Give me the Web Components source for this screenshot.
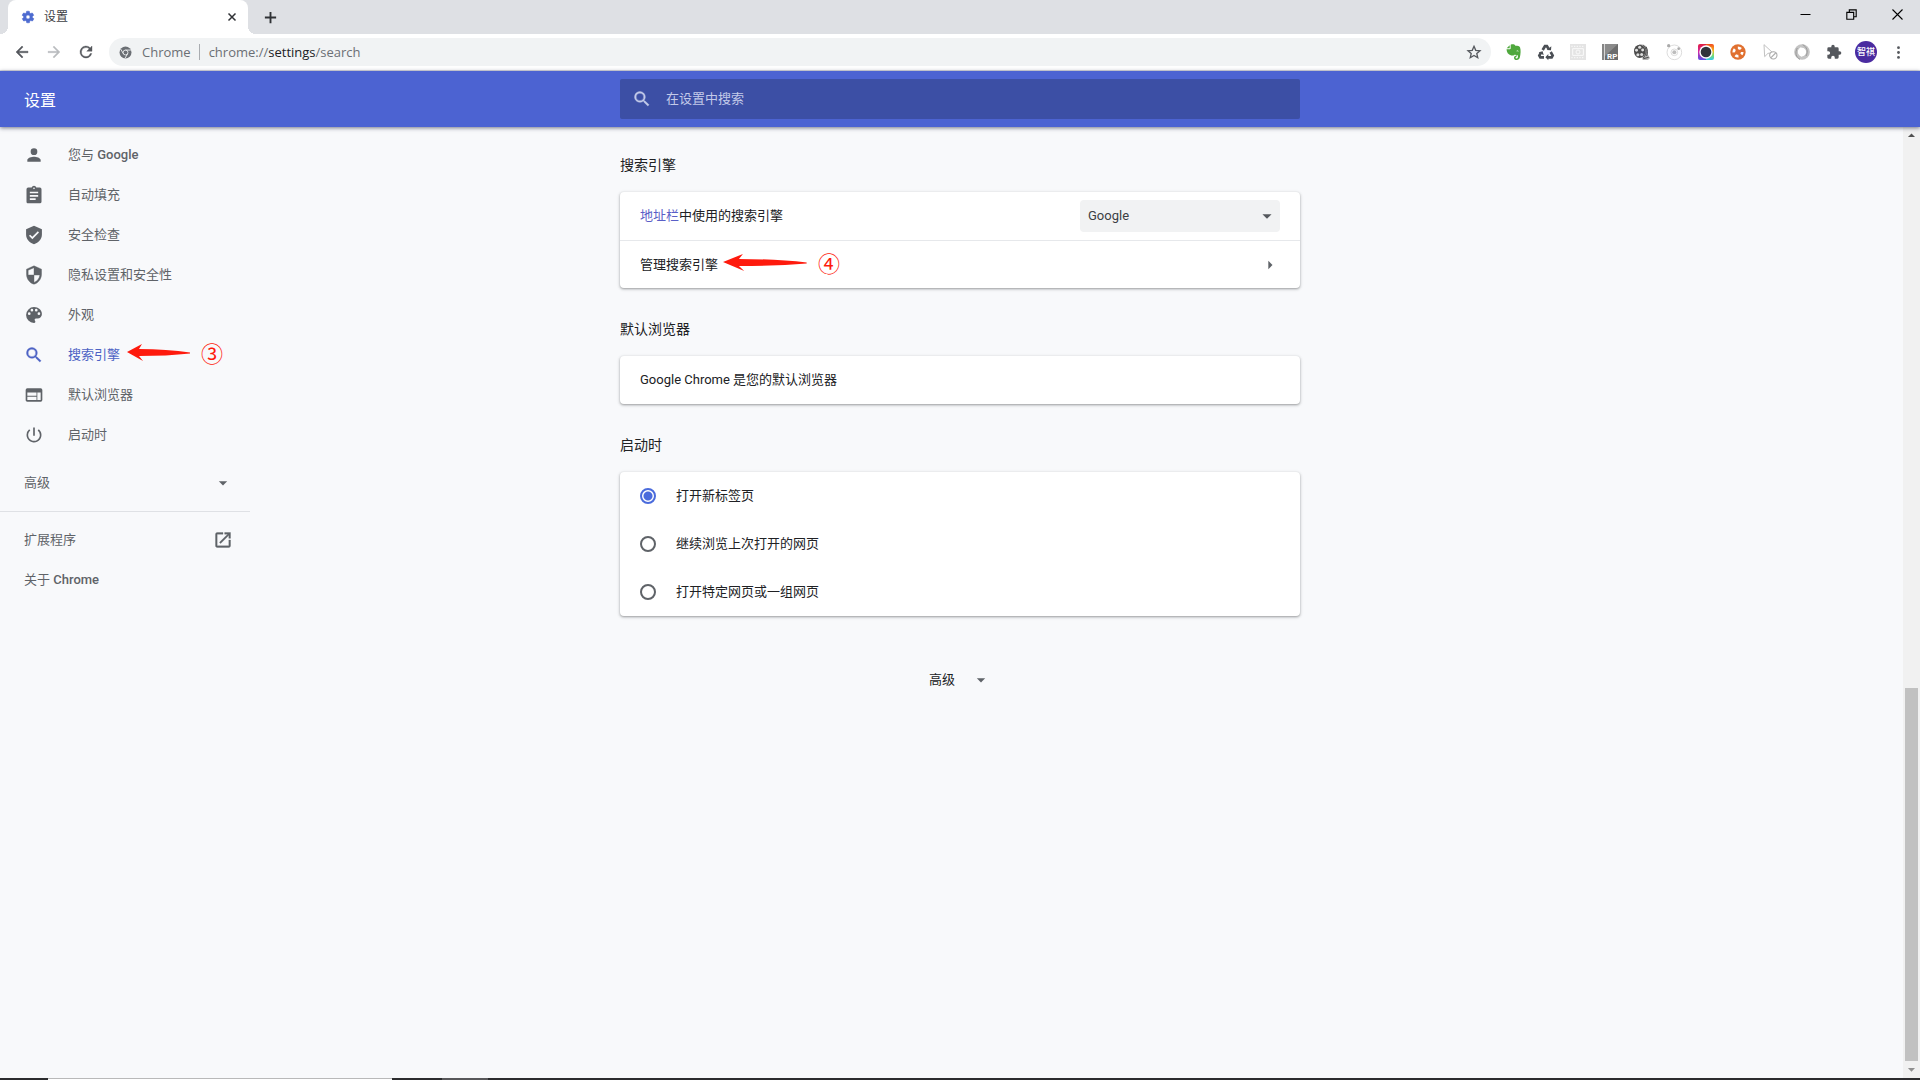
<!DOCTYPE html>
<html lang="zh-CN">
<head>
<meta charset="utf-8">
<title>设置</title>
<style>
  html, body { margin: 0; height: 100%; }
  body { font: 13px/20px Roboto, "Noto Sans CJK SC", sans-serif; color: #202124; background: #f8f9fb; overflow: hidden; }
</style>
</head>
<body>
<browser-window></browser-window>

<script>
const ICONS = {
  gear: '<path d="M19.4 13c0-.3.1-.6.1-1s0-.7-.1-1l2.1-1.6c.2-.2.3-.4.1-.7l-2-3.4c-.1-.2-.4-.3-.6-.2l-2.5 1c-.5-.4-1.100-.7-1.700-1l-.4-2.600c0-.2-.2-.4-.5-.4h-4c-.2 0-.5.2-.5.4l-.4 2.600c-.6.3-1.200.6-1.700 1l-2.500-1c-.2-.1-.5 0-.6.2l-2 3.400c-.1.2-.1.5.1.7L4.600 11c0 .3-.1.700-.1 1s0 .700.1 1l-2.100 1.600c-.2.2-.3.4-.1.7l2 3.400c.1.2.4.3.6.2l2.500-1c.5.4 1.100.7 1.700 1l.4 2.600c0 .2.3.4.5.4h4c.3 0 .5-.2.5-.4l.4-2.600c.6-.3 1.200-.6 1.700-1l2.500 1c.2.1.5 0 .6-.2l2-3.400c.1-.2.1-.5-.1-.7zM12 15.500a3.500 3.500 0 1 1 0-7 3.500 3.500 0 0 1 0 7z" stroke="currentColor" stroke-width="1"/>',
  close: '<path d="M5 5l14 14M19 5L5 19" fill="none" stroke="currentColor" stroke-width="3"/>',
  plus: '<path d="M12 3v18M3 12h18" fill="none" stroke="currentColor" stroke-width="3"/>',
  back: '<path d="M20 11H7.800l5.600-5.600L12 4l-8 8 8 8 1.400-1.400L7.800 13H20z" stroke="currentColor" stroke-width=".6"/>',
  forward: '<path d="M12 4l-1.400 1.400 5.600 5.600H4v2h12.200l-5.600 5.600L12 20l8-8z" stroke="currentColor" stroke-width=".4"/>',
  reload: '<path d="M17.650 6.350A8 8 0 1 0 19.730 14h-2.080A6 6 0 1 1 12 6c1.660 0 3.140.69 4.220 1.780L13 11h7V4z" stroke="currentColor" stroke-width=".5"/>',
  chrome: '<circle cx="12" cy="12" r="11"/><g fill="none" stroke="#f1f3f4" stroke-width="1.600"><circle cx="12" cy="12" r="4.500"/><path d="M12 7.500h10M8.100 14.300L3.200 5.800M15.900 14.300L11 22.800"/></g>',
  star: '<path d="M12 3.500l2.600 6 6.400.6-4.800 4.200 1.400 6.300-5.600-3.300-5.600 3.300 1.400-6.300L3 10.100l6.400-.6z" fill="none" stroke="currentColor" stroke-width="2"/>',
  minimize: '<path d="M4 12h16" fill="none" stroke="currentColor" stroke-width="1.600"/>',
  restore: '<path d="M4.500 8.500h11v11h-11zM8.500 8.500v-4h11v11h-4" fill="none" stroke="currentColor" stroke-width="1.800"/>',
  shut: '<path d="M4 4l16 16M20 4L4 20" fill="none" stroke="currentColor" stroke-width="1.700"/>',
  more: '<circle cx="12" cy="3" r="2.600"/><circle cx="12" cy="12" r="2.600"/><circle cx="12" cy="21" r="2.600"/>',
  person: '<path d="M12 12a4 4 0 1 0 0-8 4 4 0 0 0 0 8zm0 2c-2.670 0-8 1.340-8 4v2h16v-2c0-2.660-5.330-4-8-4z"/>',
  clipboard: '<path d="M19 3h-4.180a3 3 0 0 0-5.640 0H5a2 2 0 0 0-2 2v15c0 1.100.9 2 2 2h14a2 2 0 0 0 2-2V5a2 2 0 0 0-2-2zm-7 0a1 1 0 1 1 0 2 1 1 0 0 1 0-2zm2 15H7v-2h7zm3-4H7v-2h10zm0-4H7V8h10z"/>',
  verified: '<path d="M12 1L2.500 5v6.500c0 5.500 4 10.200 9.500 11.500 5.500-1.300 9.500-6 9.500-11.500V5zm-2 16l-4-4 1.410-1.410L10 14.170l6.590-6.590L18 9z"/>',
  shield: '<path d="M12 1L3 5v6c0 5.550 3.840 10.740 9 12 5.160-1.260 9-6.450 9-12V5zm0 10.990h7c-.53 4.120-3.280 7.790-7 8.940V12H5V6.300l7-3.110z" stroke="currentColor" stroke-width=".5"/>',
  palette: '<path d="M12 2.500A9.500 9.500 0 1 0 12 21.500a1.600 1.600 0 0 0 1.200-2.700 1.600 1.600 0 0 1 1.200-2.700H16.300a5.200 5.200 0 0 0 5.200-5.200C21.500 6.300 17.200 2.500 12 2.500zM6.300 12a1.600 1.600 0 1 1 0-3.200 1.600 1.600 0 0 1 0 3.200zm3.200-4.200a1.600 1.600 0 1 1 0-3.200 1.600 1.600 0 0 1 0 3.200zm5.200 0a1.600 1.600 0 1 1 0-3.200 1.600 1.600 0 0 1 0 3.200zm3.200 4.200a1.600 1.600 0 1 1 0-3.200 1.600 1.600 0 0 1 0 3.200z"/>',
  search: '<path d="M15.500 14h-.79l-.28-.27A6.500 6.500 0 1 0 13.730 14.430l.27.28v.79l5 4.990L20.490 19zm-6 0a4.500 4.500 0 1 1 0-9 4.500 4.500 0 0 1 0 9z" stroke="currentColor" stroke-width=".4"/>',
  browser: '<path d="M20 4H4a2 2 0 0 0-2 2v12c0 1.100.9 2 2 2h16a2 2 0 0 0 2-2V6a2 2 0 0 0-2-2zm-5 14H4v-4h11zm0-5H4V9h11zm5 5h-4V9h4z"/>',
  power: '<path d="M13 3h-2v10h2zm4.830 2.170l-1.420 1.420A6.920 6.920 0 0 1 19 12a7 7 0 1 1-11.420-5.420L6.170 5.170A8.930 8.930 0 0 0 3 12a9 9 0 1 0 14.830-6.830z"/>',
  launch: '<path d="M19 19H5V5h7V3H5a2 2 0 0 0-2 2v14c0 1.100.9 2 2 2h14a2 2 0 0 0 2-2v-7h-2zM14 3v2h3.590l-9.830 9.830 1.410 1.410L19 6.410V10h2V3z" stroke="currentColor" stroke-width=".4"/>',
  down: '<path d="M7 10l5 5 5-5z"/>',
  right: '<path d="M10 7v10l5-5z"/>',
  evernote: '<path fill="#4fa83d" d="M7 1c3-1 6-.5 7 1.500 4 0 6 .5 7 2.500 1.500 4 1 10-.2 15-.7 3-2.200 4-4.800 4-2.500 0-4-1.400-4-3.500s1.500-3.200 3.800-3v2c-1 0-1.600.3-1.600 1s.7 1.200 1.800 1.200c2 0 2-2.200 1.800-4.700-2 .5-3.800-.2-4.300-1.800-1 2-3 2.600-5.500 1.900C3 16 1 12.500.8 8H5c1.500 0 2-.5 2-2z"/><path fill="#4fa83d" d="M1 6.500L5.500 2v4.500z"/><path d="M16 10c1.500-1 3 0 3 1.600-1-.6-2-.7-3-.4z" fill="#fff"/>',
  recycle: '<g fill="none" stroke="#4b4f55" stroke-width="4"><path d="M7 9l3.400-5.700h3L16 7.500"/><path d="M19 12l3 5.300-1.500 2.700H15"/><path d="M9 20H3.500L2 17.400 4.500 13"/></g><path fill="#4b4f55" d="M13 9l6.500.5.500-6zM15.500 15v9.500L11 20zM1 12.500L7 11l1.500 6z"/>',
  film: '<path fill="#e4e4e4" d="M0 0h24v24H0z"/><g fill="none" stroke="#fafafa" stroke-width="1.500"><path d="M4 7h16v10H4z"/><circle cx="12" cy="12" r="3"/><path d="M2 3.500h20M2 20.500h20" stroke-dasharray="2 2"/></g>',
  rp: '<path fill="#858585" d="M0 0h3.500v24H0z"/><path fill="#6d6d6d" d="M4.500 0H24v24H4.500z"/><path fill="#8b8b8b" d="M4.500 0H24L4.500 18z"/><text x="7.500" y="22" font-family="Roboto" font-weight="700" font-size="12" fill="#fff">RP</text>',
  reel: '<path fill="#b5b5b5" d="M8 0l7 1c5 3 6 8 6 15l3 5-3 3h-8z"/><ellipse cx="8.500" cy="11" rx="8.500" ry="10" fill="#4c4c4c"/><g fill="#dedede"><circle cx="8.500" cy="4.800" r="2.300"/><circle cx="3.800" cy="9.500" r="2.200"/><circle cx="5.800" cy="16" r="2.300"/><circle cx="11.500" cy="15.800" r="2.300"/><circle cx="13" cy="9" r="2.200"/></g><path d="M14 2c6 5 5 13 0 19M18 4c3 5 2 10 1 14M14 22l8-2" stroke="#444" fill="none" stroke-width="1.500"/>',
  orbit: '<g fill="none" stroke="#d6d6d6" stroke-width="1.300"><circle cx="12.500" cy="12.500" r="11"/><circle cx="12.500" cy="12.500" r="5"/></g><circle cx="12.500" cy="12.500" r="3" fill="#bdbdbd"/><circle cx="4" cy="2.500" r="2.500" fill="#aaa"/><circle cx="19" cy="7" r="2" fill="#aaa"/>',
  lens: '<defs><linearGradient id="a" x1="0" y1="0" x2="0" y2="1"><stop offset="0" stop-color="#e0203e"/><stop offset=".45" stop-color="#d6249f"/><stop offset="1" stop-color="#5b50e6"/></linearGradient><linearGradient id="b" x1="0" y1="0" x2="0" y2="1"><stop offset="0" stop-color="#f04a20"/><stop offset=".4" stop-color="#f9b61c"/><stop offset=".7" stop-color="#7fdc6c"/><stop offset="1" stop-color="#31c9ee"/></linearGradient></defs><path d="M12 0H3a3 3 0 0 0-3 3v18a3 3 0 0 0 3 3h9z" fill="url(#a)"/><path d="M12 0h9a3 3 0 0 1 3 3v18a3 3 0 0 1-3 3h-9z" fill="url(#b)"/><circle cx="12" cy="12" r="10" fill="#fff"/><circle cx="12" cy="12" r="8" fill="#30333b"/>',
  lifebuoy: '<circle cx="12" cy="12" r="11.500" fill="#e07030"/><circle cx="12" cy="12" r="6.300" fill="none" stroke="#fff" stroke-width="4" stroke-dasharray="5 4.900" stroke-dashoffset="1"/>',
  pointer: '<path d="M3 1l13 12-7 1-5 5z" fill="#fff" stroke="#c2c2c2" stroke-width="1.500"/><circle cx="17" cy="17" r="5.500" fill="#fff" stroke="#aaa" stroke-width="1.600"/><path d="M13.500 20.500l7-7" stroke="#aaa" stroke-width="1.600"/>',
  rings: '<circle cx="12" cy="12" r="9" fill="none" stroke="#c4c4c4" stroke-width="5.500"/><path d="M10 5c-5 3-5 11 1 14 5-1 7-7 4-11z" fill="#fff"/><path d="M13 1c6 3 9 10 5 17M9 23C3 20 1 13 5 6" fill="none" stroke="#999" stroke-width="1.500"/>',
  puzzle: '<path d="M20.500 11H19V7a2 2 0 0 0-2-2h-4V3.500a2.500 2.500 0 0 0-5 0V5H4a2 2 0 0 0-2 2v3.800h1.500a2.700 2.700 0 0 1 0 5.400H2V20c0 1.100.9 2 2 2h3.800v-1.500a2.700 2.700 0 0 1 5.400 0V22H17a2 2 0 0 0 2-2v-4h1.500a2.500 2.500 0 0 0 0-5z"/>'
};

function define(name, html, setup) {
  const template = document.createElement('template');
  template.innerHTML = html;
  customElements.define(name, class extends HTMLElement {
    constructor() {
      super();
      this.attachShadow({ mode: 'open' }).append(template.content.cloneNode(true));
    }
    connectedCallback() { if (setup) setup(this, this.shadowRoot); }
  });
}

/* Icon on a 24-unit grid; --size gives its drawn size */
define('ui-icon', `
  <style>
    :host { display: inline-flex; flex: none; width: var(--size, 20px); height: var(--size, 20px); }
    svg { display: block; width: 100%; height: 100%; fill: currentColor; overflow: visible; }
  </style>
  <svg viewBox="0 0 24 24" aria-hidden="true"></svg>`,
  (host, root) => { root.querySelector('svg').innerHTML = ICONS[host.getAttribute('name')]; });

/* Red arrow with a numbered step */
define('step-mark', `
  <style>
    :host { display: flex; align-items: center; gap: 10px; padding-bottom: 4px; color: #fe1a0d; font: 22px/24px "Noto Sans CJK SC", sans-serif; }
    svg { width: var(--length, 64px); height: 18px; fill: currentColor; }
    span { padding-bottom: 2px; }
  </style>
  <svg viewBox="0 0 64 18" preserveAspectRatio="none" aria-hidden="true"><path d="M0 8L15 0 12 5Q40 5 63 8.500L63 9.500Q40 12 12 12L16 17z"/></svg>
  <span><slot></slot></span>`);

define('tab-strip', `
  <style>
    :host { display: flex; align-items: stretch; height: 34px; padding-left: 8px; background: #dee0e4; }
    .tab { position: relative; display: flex; align-items: center; box-sizing: border-box; width: 240px; padding: 0 10px 0 13px; background: #fff; border-radius: 8px 8px 0 0; font-size: 12px; color: #3c4043; }
    .tab::before, .tab::after { content: ""; position: absolute; bottom: 0; width: 8px; height: 8px; }
    .tab::before { right: 100%; background: radial-gradient(circle at 0 0, transparent 8px, #fff 8px); }
    .tab::after { left: 100%; background: radial-gradient(circle at 100% 0, transparent 8px, #fff 8px); }
    .name { flex: 1; margin-left: 9px; }
    button { display: flex; align-items: center; justify-content: center; padding: 0; border: 0; background: none; color: #303236; }
    .tab button { width: 12px; height: 20px; --size: 12px; }
    .gear { --size: 14px; color: #4d6bd0; }
    .new { align-self: center; width: 28px; height: 28px; margin-left: 8px; --size: 15px; }
    .window { display: flex; margin-left: auto; }
    .window button { width: 46px; height: 29px; --size: 15px; color: #000; }
  </style>
  <div class="tab"><ui-icon class="gear" name="gear"></ui-icon><span class="name">设置</span><button aria-label="关闭标签页"><ui-icon name="close"></ui-icon></button></div>
  <button class="new" aria-label="新标签页"><ui-icon name="plus"></ui-icon></button>
  <div class="window">
    <button aria-label="最小化"><ui-icon name="minimize"></ui-icon></button>
    <button aria-label="还原"><ui-icon name="restore"></ui-icon></button>
    <button aria-label="关闭"><ui-icon name="shut"></ui-icon></button>
  </div>`);

define('browser-toolbar', `
  <style>
    :host { display: flex; align-items: center; box-sizing: border-box; height: 37px; padding: 0 6px; background: #fff; border-bottom: 1px solid #dcdee3; }
    button { display: flex; flex: none; align-items: center; justify-content: center; width: 32px; height: 28px; padding: 0; border: 0; background: none; color: #55585d; --size: 18px; }
    .forward { color: #b9bbbe; }
    .address { display: flex; flex: 1; align-items: center; height: 28px; margin: 0 7px; padding: 0 1px 0 10px; border-radius: 14px; background: #f1f3f4; color: #6b6f74; font: 13px/20px "Open Sans", sans-serif; }
    .chip { margin: 0 8px 0 10px; }
    .rule { width: 1px; height: 16px; margin-right: 9px; background: #a9acb0; }
    .url { flex: 1; }
    b { font-weight: 400; color: #202124; }
    .ext { --size: 16px; }
    .avatar span { display: flex; align-items: center; justify-content: center; width: 22px; height: 22px; border-radius: 50%; background: #4a2ba0; color: #fff; font: 500 9px/22px "Noto Sans CJK SC", sans-serif; }
    .menu { --size: 13px; }
  </style>
  <button aria-label="后退"><ui-icon name="back"></ui-icon></button>
  <button class="forward" aria-label="前进"><ui-icon name="forward"></ui-icon></button>
  <button aria-label="重新加载"><ui-icon name="reload"></ui-icon></button>
  <div class="address">
    <ui-icon name="chrome" style="--size: 13px"></ui-icon><span class="chip">Chrome</span><span class="rule"></span>
    <span class="url">chrome://<b>settings</b>/search</span>
    <button aria-label="加入书签"><ui-icon name="star" style="--size: 16px"></ui-icon></button>
  </div>
  <button class="ext" aria-label="Evernote"><ui-icon name="evernote"></ui-icon></button>
  <button class="ext" aria-label="Recycle"><ui-icon name="recycle"></ui-icon></button>
  <button class="ext" aria-label="Film"><ui-icon name="film"></ui-icon></button>
  <button class="ext" aria-label="RP"><ui-icon name="rp"></ui-icon></button>
  <button class="ext" aria-label="Reel"><ui-icon name="reel"></ui-icon></button>
  <button class="ext" aria-label="Orbit"><ui-icon name="orbit"></ui-icon></button>
  <button class="ext" aria-label="Lens"><ui-icon name="lens"></ui-icon></button>
  <button class="ext" aria-label="Lifebuoy"><ui-icon name="lifebuoy"></ui-icon></button>
  <button class="ext" aria-label="Pointer"><ui-icon name="pointer"></ui-icon></button>
  <button class="ext" aria-label="Rings"><ui-icon name="rings"></ui-icon></button>
  <button class="ext" aria-label="扩展程序"><ui-icon name="puzzle"></ui-icon></button>
  <button class="avatar" aria-label="用户"><span>智祺</span></button>
  <button class="menu" aria-label="菜单"><ui-icon name="more"></ui-icon></button>`);

define('settings-header', `
  <style>
    :host { position: relative; z-index: 1; display: grid; grid-template-columns: 1fr minmax(0, 680px) 1fr; align-items: center; height: 56px; background: #4c63d2; color: #fff; box-shadow: 0 1px 4px rgba(30, 34, 60, .6); }
    h1 { margin: 0; padding: 4px 24px 0; font-size: 16px; line-height: 24px; font-weight: 400; }
    label { display: flex; align-items: center; height: 40px; padding-left: 12px; gap: 14px; border-radius: 2px; background: #3c4fa5; color: #c3cae9; }
    input { flex: 1; min-width: 0; padding: 0; border: 0; outline: 0; background: none; font: inherit; color: #fff; }
    input::placeholder { color: #c3cae9; opacity: 1; }
  </style>
  <h1>设置</h1>
  <label><ui-icon name="search"></ui-icon><input type="search" placeholder="在设置中搜索" aria-label="在设置中搜索"></label>`);

define('nav-item', `
  <style>
    :host { display: flex; align-items: center; height: 40px; padding-left: 24px; color: #5f6368; }
    :host([selected]) { color: #4c62c4; }
    a { display: flex; align-items: center; gap: 24px; color: inherit; text-decoration: none; }
    ::slotted(step-mark) { margin-left: 7px; }
    ::slotted(ui-icon) { margin-left: auto; margin-right: 17px; }
  </style>
  <a href="#"><slot></slot></a><slot name="after"></slot>`,
  (host, root) => {
    const name = host.getAttribute('icon');
    if (name && !root.querySelector('ui-icon')) {
      const icon = document.createElement('ui-icon');
      icon.setAttribute('name', name);
      root.querySelector('a').prepend(icon);
    }
  });

define('settings-nav', `
  <style>
    :host { display: block; width: 250px; padding-top: 8px; color: #5f6368; }
    b { font-weight: 500; }
    button { display: flex; align-items: center; justify-content: space-between; width: 100%; height: 40px; margin: 8px 0; padding: 0 17px 0 24px; border: 0; background: none; color: inherit; font: inherit; }
    hr { margin: 0 0 8px; border: 0; border-top: 1px solid #dfe1e5; }
  </style>
  <nav>
    <nav-item icon="person"><span>您与 <b>Google</b></span></nav-item>
    <nav-item icon="clipboard">自动填充</nav-item>
    <nav-item icon="verified">安全检查</nav-item>
    <nav-item icon="shield">隐私设置和安全性</nav-item>
    <nav-item icon="palette">外观</nav-item>
    <nav-item icon="search" selected>搜索引擎<step-mark slot="after">③</step-mark></nav-item>
    <nav-item icon="browser">默认浏览器</nav-item>
    <nav-item icon="power">启动时</nav-item>
    <button>高级<ui-icon name="down"></ui-icon></button>
    <hr>
    <nav-item>扩展程序<ui-icon name="launch" slot="after"></ui-icon></nav-item>
    <nav-item><span>关于 <b>Chrome</b></span></nav-item>
  </nav>`);

define('settings-section', `
  <style>
    :host { display: block; }
    h2 { margin: 0 0 17px; font-size: 14px; line-height: 20px; font-weight: 400; }
    .card { border-radius: 4px; background: #fff; box-shadow: 0 1px 2px rgba(60, 64, 67, .35), 0 1px 3px 1px rgba(60, 64, 67, .15); }
  </style>
  <h2><slot name="title"></slot></h2>
  <div class="card"><slot></slot></div>`);

define('settings-row', `
  <style>
    :host { display: flex; align-items: center; box-sizing: border-box; min-height: 48px; padding: 0 20px; }
    :host([divided]) { border-top: 1px solid #e6e8eb; }
  </style>
  <slot></slot>`);

define('settings-main', `
  <style>
    :host { display: flex; flex-direction: column; gap: 31px; padding-top: 28px; }
    a { color: #5a5fc7; text-decoration: none; }
    .select { display: grid; align-items: center; width: 200px; margin-left: auto; }
    .select > * { grid-area: 1 / 1; }
    select { appearance: none; height: 32px; padding: 0 32px 0 8px; border: 0; border-radius: 4px; background: #f1f2f3; color: #3c4043; font: inherit; }
    .select ui-icon { justify-self: end; margin-right: 2px; color: #55585d; pointer-events: none; --size: 22px; }
    .link, .more { padding: 0; border: 0; background: none; color: inherit; font: inherit; }
    step-mark { margin-left: 5px; --length: 85px; }
    .go { margin-left: auto; color: #5f6368; }
    label.radio { display: flex; align-items: center; gap: 20px; }
    input { appearance: none; box-sizing: border-box; width: 16px; height: 16px; margin: 0; border: 2px solid #5f6368; border-radius: 50%; }
    input:checked { border-color: #4a6bdc; background: radial-gradient(circle, #4a6bdc 4px, transparent 5px); }
    .more { display: flex; align-items: center; align-self: center; gap: 16px; height: 40px; margin-top: 13px; }
    .more ui-icon { color: #5f6368; }
  </style>
  <settings-section>
    <span slot="title">搜索引擎</span>
    <settings-row>
      <label for="engine"><a href="#">地址栏</a>中使用的搜索引擎</label>
      <div class="select"><select id="engine"><option>Google</option></select><ui-icon name="down"></ui-icon></div>
    </settings-row>
    <settings-row divided>
      <button class="link">管理搜索引擎</button><step-mark>④</step-mark><ui-icon class="go" name="right"></ui-icon>
    </settings-row>
  </settings-section>
  <settings-section>
    <span slot="title">默认浏览器</span>
    <settings-row>Google Chrome 是您的默认浏览器</settings-row>
  </settings-section>
  <settings-section>
    <span slot="title">启动时</span>
    <settings-row><label class="radio"><input type="radio" name="startup" checked>打开新标签页</label></settings-row>
    <settings-row><label class="radio"><input type="radio" name="startup">继续浏览上次打开的网页</label></settings-row>
    <settings-row><label class="radio"><input type="radio" name="startup">打开特定网页或一组网页</label></settings-row>
  </settings-section>
  <button class="more">高级<ui-icon name="down"></ui-icon></button>`);

define('scroll-track', `
  <style>
    :host { display: flex; flex-direction: column; align-items: center; width: 17px; background: #f1f1f1; color: #505050; --size: 17px; }
    .up { transform: rotate(180deg); }
    .down { color: #8f8f8f; }
    .space { flex: 544; }
    .thumb { flex: 373; width: 13px; background: #c1c1c1; }
  </style>
  <ui-icon class="up" name="down"></ui-icon><div class="space"></div><div class="thumb"></div><ui-icon class="down" name="down"></ui-icon>`);

/* Top edge of the system taskbar */
define('taskbar-edge', `
  <style>
    :host { display: flex; height: 2px; background: #2c2c2e; }
    .open { width: 344px; margin-left: 48px; box-sizing: border-box; background: #fff; border-top: 1px solid #b9b9b9; }
    .idle { width: 46px; margin-left: 50px; background: #58585a; }
  </style>
  <div class="open"></div><div class="idle"></div>`);

define('browser-window', `
  <style>
    :host { display: flex; flex-direction: column; height: 100vh; }
    .page { display: grid; flex: 1; min-height: 0; grid-template-columns: 1fr minmax(0, 680px) 1fr; }
    scroll-track { justify-self: end; }
  </style>
  <tab-strip></tab-strip>
  <browser-toolbar></browser-toolbar>
  <settings-header></settings-header>
  <div class="page"><settings-nav></settings-nav><settings-main></settings-main><scroll-track></scroll-track></div>
  <taskbar-edge></taskbar-edge>`);
</script>
</body>
</html>
